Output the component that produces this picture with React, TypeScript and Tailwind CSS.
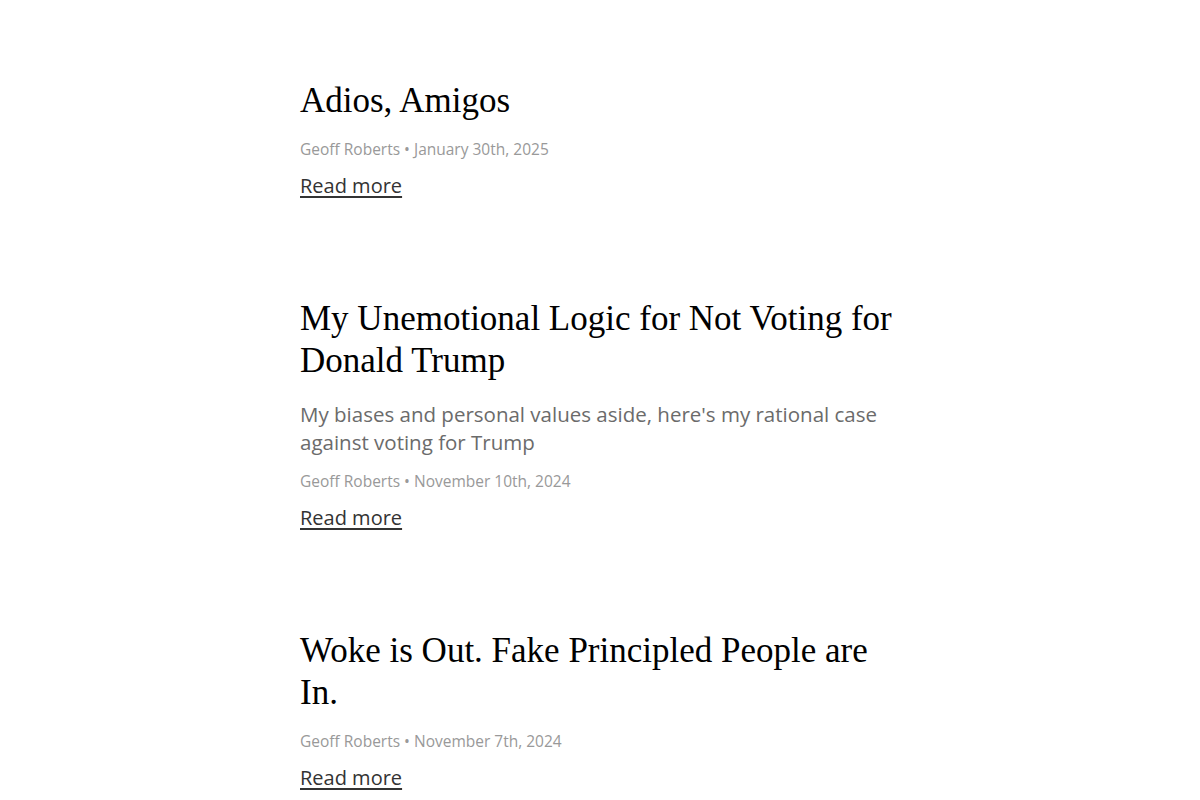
import React from 'react';

type Post = {
  id: number;
  title: string;
  subtitle?: string;
  author: string;
  date: string;
};

const posts: Post[] = [
  { id: 1, title: 'Adios, Amigos', author: 'Geoff Roberts', date: 'January 30th, 2025' },
  {
    id: 2,
    title: 'My Unemotional Logic for Not Voting for Donald Trump',
    subtitle: "My biases and personal values aside, here's my rational case against voting for Trump",
    author: 'Geoff Roberts',
    date: 'November 10th, 2024',
  },
  { id: 3, title: 'Woke is Out. Fake Principled People are In.', author: 'Geoff Roberts', date: 'November 7th, 2024' },
];

const sans = "font-['Open_Sans','Liberation_Sans',sans-serif]";

const PostPreview: React.FC<{ post: Post }> = ({ post }) => (
  <article className="mb-[98px]">
    <h2 className="font-['Liberation_Serif','Times_New_Roman',serif] text-[35px] leading-[42px] font-normal text-black">
      {post.title}
    </h2>
    {post.subtitle && (
      <p className={`${sans} mt-[18px] text-[20.5px] leading-[28px] text-[#6b6b6b]`}>{post.subtitle}</p>
    )}
    <div className={`${sans} ${post.subtitle ? 'mt-[14px]' : 'mt-[16px]'} text-[15.5px] leading-[22px] text-[#999]`}>
      {post.author} • {post.date}
    </div>
    <a
      href="#"
      className={`${sans} mt-[12px] inline-block text-[20px] leading-[28px] text-[#333] underline decoration-2 underline-offset-[3px]`}
    >
      Read more
    </a>
  </article>
);

export default function App() {
  return (
    <div className="min-h-screen bg-white">
      <main className="mx-auto w-[600px] pt-[80px]">
        {posts.map((p) => (
          <PostPreview key={p.id} post={p} />
        ))}
      </main>
    </div>
  );
}
